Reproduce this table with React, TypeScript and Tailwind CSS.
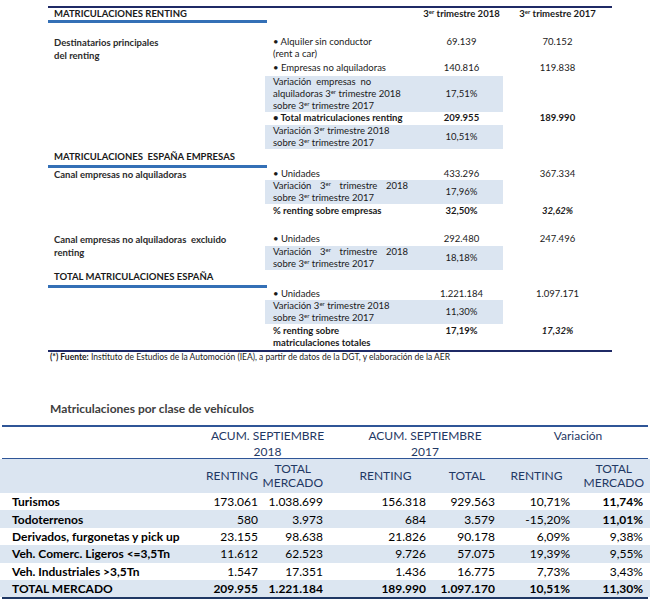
import React from "react";

// superíndice "er" de 3er
function Er() {
  return <span className="relative top-[-3px] text-[6px] leading-none">er</span>;
}

// fila interior: etiqueta + valor 2018 (sombreado opcional) + valor 2017
function SubRow({
  children,
  v18,
  v17,
  shaded,
  b18,
  b17,
  i17,
  className = "",
}: {
  children: React.ReactNode;
  v18?: string;
  v17?: string;
  shaded?: boolean;
  b18?: boolean;
  b17?: boolean;
  i17?: boolean;
  className?: string;
}) {
  return (
    <div className={`flex ${className}`}>
      <div className={`flex w-[238px] ${shaded ? "items-center bg-[#dbe5f1]" : "items-start"}`}>
        <div className="w-[155px] pl-[8px] pr-[12px]">{children}</div>
        <div className={`w-[83px] text-center ${b18 ? "font-bold" : ""}`}>{v18}</div>
      </div>
      <div className={`w-[109px] text-center ${b17 ? "font-bold" : ""} ${i17 ? "italic" : ""}`}>{v17}</div>
    </div>
  );
}

function Group({
  title,
  children,
  className = "",
}: {
  title: React.ReactNode;
  children: React.ReactNode;
  className?: string;
}) {
  return (
    <div className={`flex ${className}`}>
      <div className="w-[217px] pl-[6px] font-bold leading-[13px] text-[#2b2b2b]">{title}</div>
      <div className="flex flex-col">{children}</div>
    </div>
  );
}

function Section({ title, className = "" }: { title: string; className?: string }) {
  return (
    <div
      className={`w-[219px] whitespace-pre border-b-[3px] border-[#3470b6] pb-[2px] pl-[6px] font-bold ${className}`}
    >
      {title}
    </div>
  );
}

function Justified({ words }: { words: React.ReactNode[] }) {
  return (
    <div className="flex justify-between">
      {words.map((w, i) => (
        <span key={i}>{w}</span>
      ))}
    </div>
  );
}

const VAR_WORDS = [
  "Variación",
  <>
    3<Er />
  </>,
  "trimestre",
  "2018",
];

function TopTable() {
  return (
    <div className="ml-[48px] w-[564px] pt-[6px] text-[9.5px] leading-[12px]">
      <div className="h-[1.5px] bg-[#1f2a66]" />
      <div className="mt-[0.5px] flex">
        <div className="w-[219px] border-b-[3px] border-[#3470b6] pl-[6px] font-bold">
          MATRICULACIONES RENTING
        </div>
        <div className="w-[153px]" />
        <div className="w-[83px] whitespace-nowrap text-center font-bold">
          3<Er /> trimestre 2018
        </div>
        <div className="w-[109px] whitespace-nowrap text-center font-bold">
          3<Er /> trimestre 2017
        </div>
      </div>

      <Group
        className="mt-[13px]"
        title={
          <>
            Destinatarios principales
            <br />
            del renting
          </>
        }
      >
        <SubRow v18="69.139" v17="70.152">
          • Alquiler sin conductor
          <br />
          (rent a car)
        </SubRow>
        <SubRow className="mt-[2px]" v18="140.816" v17="119.838">
          • Empresas no alquiladoras
        </SubRow>
        <SubRow className="mt-[2px]" shaded v18="17,51%">
          <div className="whitespace-pre">Variación  empresas  no</div>
          <div className="whitespace-nowrap">
            alquiladoras 3<Er /> trimestre 2018
          </div>
          <div>
            sobre 3<Er /> trimestre 2017
          </div>
        </SubRow>
        <SubRow v18="209.955" v17="189.990" b18 b17>
          <span className="whitespace-nowrap font-bold">• Total matriculaciones renting</span>
        </SubRow>
        <SubRow className="mt-[1px]" shaded v18="10,51%">
          <div>
            Variación 3<Er /> trimestre 2018
          </div>
          <div>
            sobre 3<Er /> trimestre 2017
          </div>
        </SubRow>
      </Group>

      <Section className="mt-[2px]" title="MATRICULACIONES  ESPAÑA EMPRESAS" />
      <Group title="Canal empresas no alquiladoras">
        <SubRow v18="433.296" v17="367.334">
          • Unidades
        </SubRow>
        <SubRow shaded v18="17,96%">
          <Justified words={VAR_WORDS} />
          <div>
            sobre 3<Er /> trimestre 2017
          </div>
        </SubRow>
        <SubRow className="mt-[1px]" v18="32,50%" v17="32,62%" b18 b17 i17>
          <span className="font-bold">% renting sobre empresas</span>
        </SubRow>
      </Group>

      <Group
        className="mt-[16px]"
        title={
          <>
            <span className="whitespace-pre">Canal empresas no alquiladoras  excluido</span>
            <br />
            renting
          </>
        }
      >
        <SubRow v18="292.480" v17="247.496">
          • Unidades
        </SubRow>
        <SubRow className="mt-[1px]" shaded v18="18,18%">
          <Justified words={VAR_WORDS} />
          <div>
            sobre 3<Er /> trimestre 2017
          </div>
        </SubRow>
      </Group>

      <Section className="mt-[1px]" title="TOTAL MATRICULACIONES ESPAÑA" />
      <Group title="">
        <SubRow v18="1.221.184" v17="1.097.171">
          • Unidades
        </SubRow>
        <SubRow shaded v18="11,30%">
          <div>
            Variación 3<Er /> trimestre 2018
          </div>
          <div>
            sobre 3<Er /> trimestre 2017
          </div>
        </SubRow>
        <SubRow className="mt-[1px]" v18="17,19%" v17="17,32%" b18 b17 i17>
          <div className="font-bold">
            % renting sobre
            <br />
            <span className="whitespace-nowrap">matriculaciones totales</span>
          </div>
        </SubRow>
      </Group>

      <div className="mt-[1px] h-[1.5px] bg-[#1f2a66]" />
      <div className="whitespace-nowrap pl-[2px] pt-[0.5px] text-[8.5px] leading-[10px]">
        <span className="font-bold">(*) Fuente:</span> Instituto de Estudios de la Automoción (IEA), a
        partir de datos de la DGT, y elaboración de la AER
      </div>
    </div>
  );
}

const ROWS: { label: string; vals: string[]; stripe: boolean; boldLast?: boolean; total?: boolean }[] = [
  { label: "Turismos", vals: ["173.061", "1.038.699", "156.318", "929.563", "10,71%", "11,74%"], stripe: false, boldLast: true },
  { label: "Todoterrenos", vals: ["580", "3.973", "684", "3.579", "-15,20%", "11,01%"], stripe: true, boldLast: true },
  { label: "Derivados, furgonetas y pick up", vals: ["23.155", "98.638", "21.826", "90.178", "6,09%", "9,38%"], stripe: false },
  { label: "Veh. Comerc. Ligeros <=3,5Tn", vals: ["11.612", "62.523", "9.726", "57.075", "19,39%", "9,55%"], stripe: true },
  { label: "Veh. Industriales >3,5Tn", vals: ["1.547", "17.351", "1.436", "16.775", "7,73%", "3,43%"], stripe: false },
  { label: "TOTAL MERCADO", vals: ["209.955", "1.221.184", "189.990", "1.097.170", "10,51%", "11,30%"], stripe: true, total: true },
];

const COLS = ["w-[62px] pr-[4px]", "w-[65px] pr-[4px]", "w-[103px] pr-[4px]", "w-[69px] pr-[4px]", "w-[75px] pr-[4px]", "w-[76px] pr-[7px]"];

function BottomTable() {
  return (
    <div className="text-[12px]">
      <div className="mt-[40px] pl-[50px] text-[12px] font-bold leading-[14px] text-[#404040]">
        Matriculaciones por clase de vehículos
      </div>
      <div className="mx-[2px] mt-[9px] h-[2px] bg-[#2f5597]" />
      <div className="flex h-[31px] pt-[1px] leading-[16px] text-[#1f3864]">
        <div className="w-[200px]" />
        <div className="w-[127px] pl-[8px] text-center">
          ACUM. SEPTIEMBRE
          <br />
          2018
        </div>
        <div className="w-[172px] pl-[24px] text-center">
          ACUM. SEPTIEMBRE
          <br />
          2017
        </div>
        <div className="w-[151px] pl-[7px] text-center">Variación</div>
      </div>
      <div className="mx-[2px] h-[1px] bg-[#2f5597]" />
      <div className="flex h-[34px] items-center bg-[#dbe5f1] leading-[14px] text-[#1f3864]">
        <div className="w-[200px]" />
        <div className="w-[62px] pr-[4px] text-right">RENTING</div>
        <div className="w-[65px] pr-[4px] text-right">
          <span className="inline-block text-center">
            TOTAL
            <br />
            MERCADO
          </span>
        </div>
        <div className="w-[103px] pl-[14px] text-center">RENTING</div>
        <div className="w-[69px] pl-[5px] text-center">TOTAL</div>
        <div className="w-[75px] text-center">RENTING</div>
        <div className="w-[76px] pr-[6px] text-right">
          <span className="inline-block text-center">
            TOTAL
            <br />
            MERCADO
          </span>
        </div>
      </div>
      {ROWS.map((r) => (
        <div
          key={r.label}
          className={`flex h-[17.4px] items-center leading-[17px] text-black ${r.stripe ? "bg-[#dce6f1]" : ""} ${
            r.total ? "font-bold" : ""
          }`}
        >
          <div className="w-[200px] whitespace-nowrap pl-[12px] font-bold">{r.label}</div>
          {r.vals.map((v, i) => (
            <div
              key={i}
              className={`${COLS[i]} text-right ${i === 5 && r.boldLast ? "font-bold" : ""}`}
            >
              {v}
            </div>
          ))}
        </div>
      ))}
      <div className="mx-[2px] h-[2px] bg-[#1f3864]" />
    </div>
  );
}

export default function App() {
  return (
    <div className="h-[605px] w-[650px] overflow-hidden bg-white font-[Lato,sans-serif] text-[#1a1a1a]">
      <TopTable />
      <BottomTable />
    </div>
  );
}
